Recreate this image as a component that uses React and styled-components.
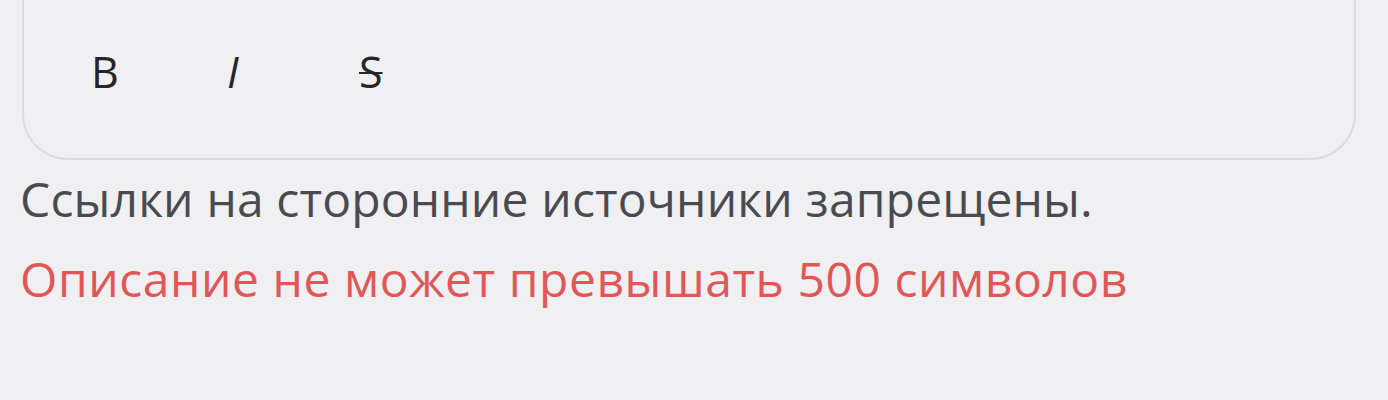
import React from "react";
import styled, { createGlobalStyle } from "styled-components";

const Global = createGlobalStyle`
  html, body {
    margin: 0;
    padding: 0;
    background: #f0f0f2;
  }
  body {
    font-family: "Open Sans", "Noto Sans", sans-serif;
  }
`;

const Page = styled.div`
  width: 1388px;
  height: 400px;
  padding: 0 32px 0 20px;
  box-sizing: border-box;
  overflow: hidden;
`;

const Editor = styled.div`
  height: 160px;
  box-sizing: border-box;
  margin-left: 2px;
  border: 2px solid #dcdcde;
  border-top: none;
  border-radius: 0 0 46px 46px;
  background: #f0f0f2;
  display: flex;
  align-items: flex-start;
  padding: 50px 0 0 67px;
`;

const ToolButton = styled.button`
  width: ${(p) => p.$w}px;
  height: 44px;
  border: none;
  background: transparent;
  padding: 0;
  text-align: left;
  font-family: "Open Sans", "Noto Sans", sans-serif;
  font-size: 43px;
  line-height: 44px;
  color: #26262a;
  font-weight: 500;
  font-style: ${(p) => (p.$italic ? "italic" : "normal")};
  text-decoration: ${(p) => (p.$strike ? "line-through" : "none")};
  text-decoration-thickness: 2px;
  cursor: pointer;
`;

const Hint = styled.p`
  margin: 9px 0 0;
  font-size: 48px;
  line-height: 60px;
  font-weight: 500;
  color: #4a4b50;
  letter-spacing: 0.15px;
  white-space: nowrap;
`;

const Error = styled.p`
  margin: 20px 0 0;
  font-size: 48px;
  line-height: 60px;
  font-weight: 500;
  color: #e05757;
  letter-spacing: 0.55px;
  white-space: nowrap;
`;

export default function App() {
  return (
    <>
      <Global />
      <Page>
        <Editor>
          <ToolButton $w={136}>B</ToolButton>
          <ToolButton $w={132} $italic>I</ToolButton>
          <ToolButton $w={40} $strike>S</ToolButton>
        </Editor>
        <Hint>Ссылки на сторонние источники запрещены.</Hint>
        <Error>Описание не может превышать 500 символов</Error>
      </Page>
    </>
  );
}
